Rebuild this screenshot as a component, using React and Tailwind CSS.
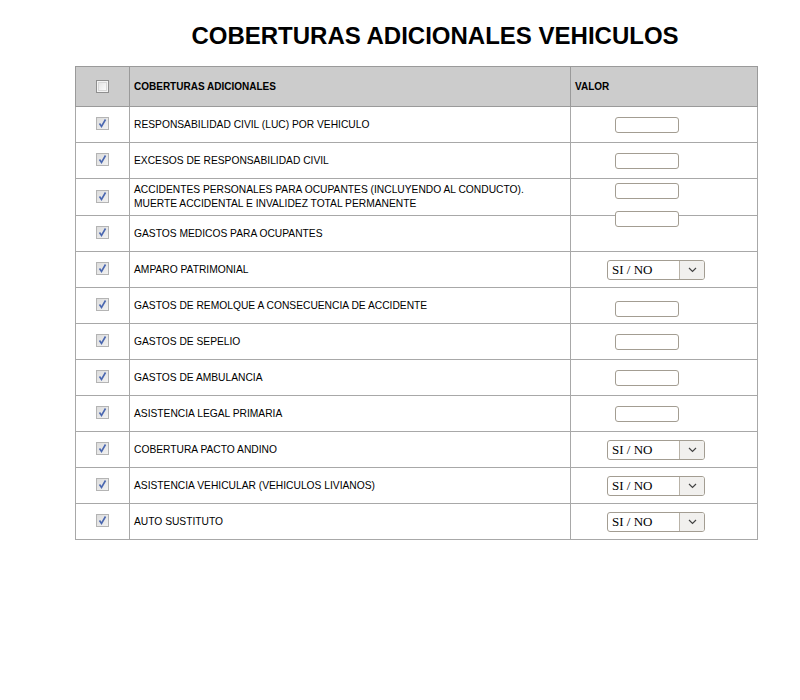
import React from "react";

const rows = [
  { label: "RESPONSABILIDAD CIVIL (LUC) POR VEHICULO", kind: "input" },
  { label: "EXCESOS DE RESPONSABILIDAD CIVIL", kind: "input" },
  {
    label: "ACCIDENTES PERSONALES PARA OCUPANTES (INCLUYENDO AL CONDUCTO).",
    label2: "MUERTE ACCIDENTAL E INVALIDEZ TOTAL PERMANENTE",
    kind: "input",
    top: true,
  },
  { label: "GASTOS MEDICOS PARA OCUPANTES", kind: "input", raised: true },
  { label: "AMPARO PATRIMONIAL", kind: "select" },
  { label: "GASTOS DE REMOLQUE A CONSECUENCIA DE ACCIDENTE", kind: "input", low: true },
  { label: "GASTOS DE SEPELIO", kind: "input" },
  { label: "GASTOS DE AMBULANCIA", kind: "input" },
  { label: "ASISTENCIA LEGAL PRIMARIA", kind: "input" },
  { label: "COBERTURA PACTO ANDINO", kind: "select" },
  { label: "ASISTENCIA VEHICULAR (VEHICULOS LIVIANOS)", kind: "select" },
  { label: "AUTO SUSTITUTO", kind: "select" },
];

function Check({ checked }) {
  if (!checked) {
    return (
      <span className="inline-flex w-[13px] h-[13px] border border-[#8f8f8f] bg-[#f4f4f4] items-center justify-center">
        <span className="w-[9px] h-[9px] border border-[#d8d8d8] bg-gradient-to-br from-[#e6e6e6] to-[#fbfbfb]"></span>
      </span>
    );
  }
  return (
    <span className="inline-flex w-[13px] h-[13px] border border-[#b4b4b4] bg-gradient-to-br from-[#dcdcdc] to-[#f2f2f2] items-center justify-center">
      <svg width="11" height="11" viewBox="0 0 11 11">
        <path d="M2.5 5.5 L4.5 8.5 L8.5 1.5" fill="none" stroke="#4a67b0" strokeWidth="1.6" />
      </svg>
    </span>
  );
}

function TextBox() {
  return <div className="ml-[44px] w-[64px] h-[16px] border border-[#a39d92] rounded-[3px] bg-white"></div>;
}

function SiNo() {
  return (
    <div className="ml-[36px] w-[98px] h-[20px] flex border border-[#a39d92] rounded-[3px] bg-white overflow-hidden">
      <div className="flex-1 pl-[4px] text-[13px] leading-[18px] text-black" style={{ fontFamily: '"Liberation Serif", serif' }}>
        SI / NO
      </div>
      <div className="w-[25px] border-l border-[#b9b3a8] bg-[#f1f0ee] flex items-center justify-center">
        <svg width="9" height="6" viewBox="0 0 9 6">
          <path d="M1 1 L4.5 4.5 L8 1" fill="none" stroke="#444" strokeWidth="1.2" />
        </svg>
      </div>
    </div>
  );
}

export default function App() {
  return (
    <div className="w-[800px] h-[700px] bg-white" style={{ fontFamily: '"Liberation Sans", Arial, sans-serif' }}>
      {/* TITLE */}
      <div className="flex justify-center pl-[70px] pt-[22px] h-[66px]">
        <h1 className="text-[24px] font-bold leading-[28px] text-black">COBERTURAS ADICIONALES VEHICULOS</h1>
      </div>

      {/* TABLE */}
      <table className="ml-[75px] w-[682px] table-fixed border-collapse text-[10.25px] text-black">
        <colgroup>
          <col className="w-[54px]" />
          <col className="w-[441px]" />
          <col className="w-[187px]" />
        </colgroup>
        <thead>
          <tr className="h-[40px] bg-[#cccccc]">
            <th className="border border-[#9a9a9a] text-center align-middle">
              <span className="inline-flex pt-[2px]"><Check checked={false} /></span>
            </th>
            <th className="border border-[#9a9a9a] text-left pl-[4px] text-[10px] font-bold">COBERTURAS ADICIONALES</th>
            <th className="border border-[#9a9a9a] text-left pl-[4px] text-[10px] font-bold">VALOR</th>
          </tr>
        </thead>
        <tbody>
          {rows.map((r, i) => (
            <tr key={i} className={r.label2 ? "h-[37px]" : "h-[36px]"}>
              <td className="border border-[#a8a8a8] text-center align-middle">
                <span className="inline-flex pt-[2px]"><Check checked /></span>
              </td>
              <td className="border border-[#a8a8a8] pl-[4px] align-middle leading-[14px]">
                <div>{r.label}</div>
                {r.label2 && <div>{r.label2}</div>}
              </td>
              <td className={"border border-[#a8a8a8] " + (r.top ? "align-top pt-[4px]" : "align-middle")}>
                {r.kind === "input" ? (
                  r.raised ? (
                    <div className="relative -top-[15px]"><TextBox /></div>
                  ) : (
                    <div className={r.low ? "pt-[6px]" : ""}><TextBox /></div>
                  )
                ) : (
                  <SiNo />
                )}
              </td>
            </tr>
          ))}
        </tbody>
      </table>
    </div>
  );
}
